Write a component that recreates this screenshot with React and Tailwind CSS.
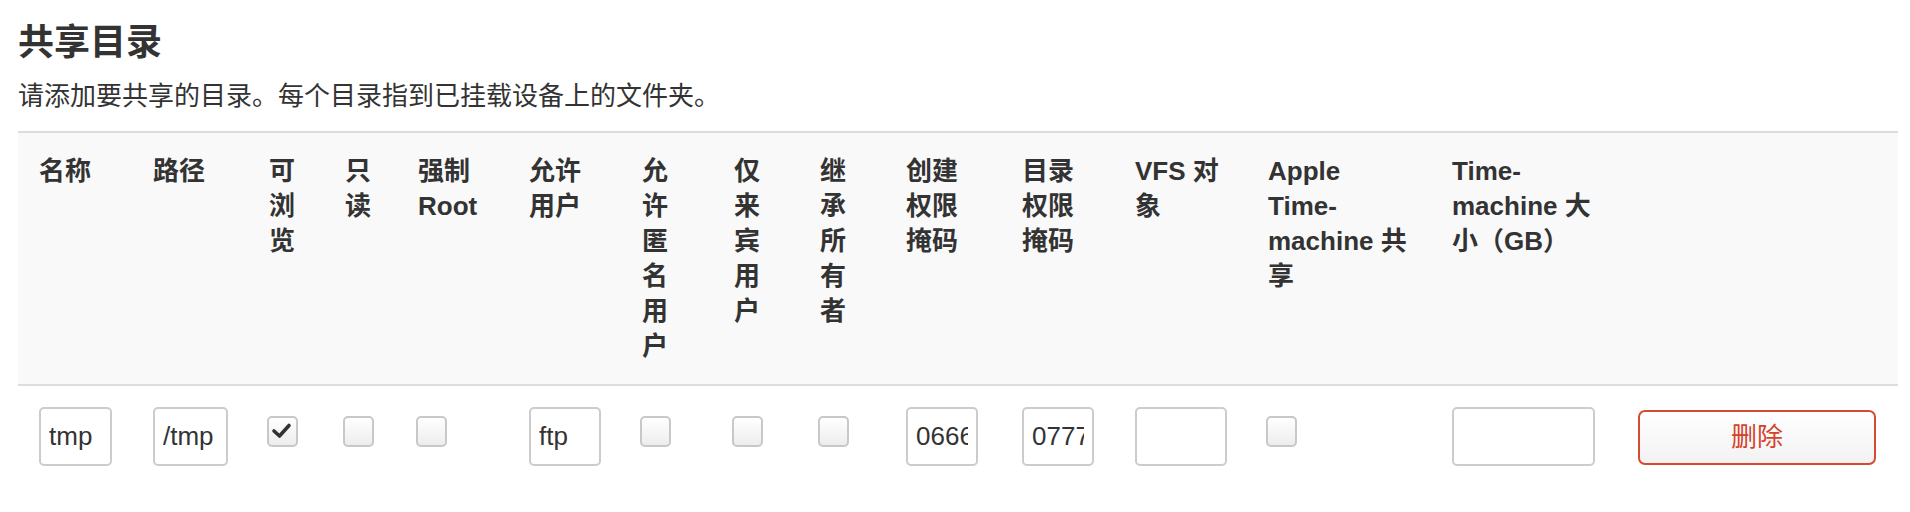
import React from 'react';

function TextInput({ value, className = 'w-full' }) {
    return (
        <input
            readOnly
            value={value}
            className={`block ${className} h-[59px] rounded-[5px] border-2 border-[#ccc] bg-white px-[8px] text-[26px] text-[#333] outline-none`}
        />
    );
}

function Check({ checked }) {
    return (
        <span className="mt-[9px] -ml-[2px] flex h-[31px] w-[31px] items-center justify-center rounded-[5px] border-2 border-[#c8c8c8] bg-linear-to-b from-white to-[#ededed]">
            {checked && (
                <svg width="27" height="27" viewBox="0 0 27 27">
                    <polyline points="5,13 10.5,18 20,7.5" fill="none" stroke="#333" strokeWidth="3.6" strokeLinecap="round" strokeLinejoin="round" />
                </svg>
            )}
        </span>
    );
}

const th = "bg-[#f9f9f9] border-t-2 border-b-2 border-[#ddd] pt-[21px] pb-[20px] pl-[21px] pr-[20px] align-top text-left font-bold text-[26px] leading-[35px]";
const td = "pt-[21px] pb-[20px] pl-[21px] pr-[20px] align-top";

export default function App() {
    return (
        <div className="min-h-[512px] bg-white pl-[18px] pr-[12px] font-['Liberation_Sans','Noto_Sans_CJK_SC',sans-serif] text-[#333]">
            <h2 className="pt-[23px] text-[36px] leading-[40px] font-bold">共享目录</h2>
            <p className="mt-[16px] text-[26px] leading-[35px]">请添加要共享的目录。每个目录指到已挂载设备上的文件夹。</p>

            <table className="mt-[17px] w-[1880px] table-fixed border-collapse">
                <colgroup>
                    <col className="w-[114px]" />
                    <col className="w-[116px]" />
                    <col className="w-[76px]" />
                    <col className="w-[73px]" />
                    <col className="w-[111px]" />
                    <col className="w-[113px]" />
                    <col className="w-[92px]" />
                    <col className="w-[86px]" />
                    <col className="w-[86px]" />
                    <col className="w-[116px]" />
                    <col className="w-[113px]" />
                    <col className="w-[133px]" />
                    <col className="w-[184px]" />
                    <col className="w-[184px]" />
                    <col className="w-[283px]" />
                </colgroup>
                <thead>
                    <tr>
                        <th className={th}>名称</th>
                        <th className={th}>路径</th>
                        <th className={th}>可浏览</th>
                        <th className={th}>只读</th>
                        <th className={th}>强制 Root</th>
                        <th className={th}>允许用户</th>
                        <th className={th}>允许匿名用户</th>
                        <th className={th}>仅来宾用户</th>
                        <th className={th}>继承所有者</th>
                        <th className={th}>创建权限掩码</th>
                        <th className={th}>目录权限掩码</th>
                        <th className={th}>VFS 对象</th>
                        <th className={th}>Apple Time-machine 共享</th>
                        <th className={th}>Time-machine 大小（GB）</th>
                        <th className={th}></th>
                    </tr>
                </thead>
                <tbody>
                    <tr>
                        <td className={td}><TextInput value="tmp" /></td>
                        <td className={td}><TextInput value="/tmp" /></td>
                        <td className={td}><Check checked /></td>
                        <td className={td}><Check /></td>
                        <td className={td}><Check /></td>
                        <td className={td}><TextInput value="ftp" /></td>
                        <td className={td}><Check /></td>
                        <td className={td}><Check /></td>
                        <td className={td}><Check /></td>
                        <td className={td}><TextInput value="0666" className="w-[72px]" /></td>
                        <td className={td}><TextInput value="0777" /></td>
                        <td className={td}><TextInput value="" /></td>
                        <td className={td}><Check /></td>
                        <td className={td}><TextInput value="" /></td>
                        <td className={td}>
                            <button className="mt-[3px] ml-[2px] block h-[55px] w-[238px] rounded-[7px] border-2 border-[#d64a33] bg-linear-to-b from-white to-[#f2f2f2] text-[26px] text-[#d4422c]">
                                删除
                            </button>
                        </td>
                    </tr>
                </tbody>
            </table>
        </div>
    );
}
